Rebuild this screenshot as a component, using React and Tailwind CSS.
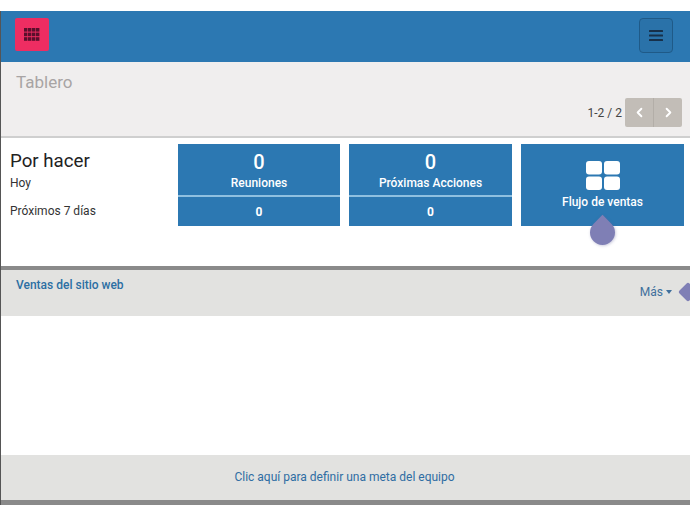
import { ChevronLeft, ChevronRight } from "lucide-react";

const font = { fontFamily: "Roboto, 'Liberation Sans', sans-serif" };

function StatCard({ label, width }) {
  return (
    <div className={`flex h-[82px] flex-col bg-[#2c78b2] text-white ${width}`}>
      <div className="flex h-[53px] flex-col items-center border-b-2 border-[#8fc0e0]">
        <span className="mt-[4px] text-[20px] leading-[28px] font-medium">0</span>
        <span className="text-[12px] leading-[15px] font-medium">{label}</span>
      </div>
      <div className="flex flex-1 items-center justify-center text-[12px] font-bold">0</div>
    </div>
  );
}

export default function App() {
  return (
    <div className="h-[505px] w-[690px] overflow-hidden bg-white pt-[11px] text-[#333]" style={font}>
      <div className="flex h-[494px] flex-col border-l-[1.5px] border-[#555]">
        {/* top bar */}
        <header className="flex h-[51px] items-start justify-between bg-[#2c78b2] pt-[7px] pr-[17px] pl-[13.5px]">
          <button className="flex h-[33px] w-[34px] items-center justify-center rounded-[2px] bg-[#ee2d62]">
            <svg width="16" height="13" viewBox="0 0 16 13" fill="#5a0f2c">
              {[0, 4.6, 9.2].map((y) =>
                [0, 4, 8, 12].map((x) => <rect key={`${x}-${y}`} x={x} y={y} width="3.4" height="3.6" />)
              )}
            </svg>
          </button>
          <button className="flex h-[35px] w-[34px] items-center justify-center rounded-[4px] border border-[#1f5a88] bg-[#2a72a9]">
            <svg width="14" height="11" viewBox="0 0 14 11" fill="#17304a">
              <rect width="14" height="2" rx="0.5" />
              <rect y="4.5" width="14" height="2" rx="0.5" />
              <rect y="9" width="14" height="2" rx="0.5" />
            </svg>
          </button>
        </header>

        {/* breadcrumb + pager */}
        <div className="flex h-[76px] flex-col border-b-2 border-[#cfcfcf] bg-[#f0eeee] pr-[8px] pl-[15px]">
          <h1 className="mt-[9px] h-[27px] text-[17px] leading-[22px] text-[#a8a4a4]">Tablero</h1>
          <div className="flex items-center justify-end">
            <span className="mr-[3px] text-[12px] text-[#444]">1-2 / 2</span>
            <div className="flex h-[29px] w-[57px] overflow-hidden rounded-[2px] bg-[#c2bdb7] text-white">
              <div className="flex flex-1 items-center justify-center border-r border-[#b3aea8]">
                <ChevronLeft size={15} strokeWidth={3} />
              </div>
              <div className="flex flex-1 items-center justify-center">
                <ChevronRight size={15} strokeWidth={3} />
              </div>
            </div>
          </div>
        </div>

        {/* to do row */}
        <div className="flex h-[128px] justify-between pt-[6px] pr-[6px] pl-[9px]">
          <div className="w-[160px]">
            <h2 className="mt-[6px] text-[18.7px] leading-[22px] text-[#222]">Por hacer</h2>
            <p className="mt-[3px] text-[12px] leading-[16px]">Hoy</p>
            <p className="mt-[12px] text-[12px] leading-[16px]">Próximos 7 días</p>
          </div>
          <div className="flex gap-[9px]">
            <StatCard label="Reuniones" width="w-[162px]" />
            <StatCard label="Próximas Acciones" width="w-[163px]" />
            <div className="relative flex h-[82px] w-[163px] flex-col items-center bg-[#2c78b2] text-white">
              <svg className="mt-[17px]" width="34" height="29" viewBox="0 0 34 29" fill="#fff">
                <rect width="16" height="13.5" rx="3" />
                <rect x="18" width="16" height="13.5" rx="3" />
                <rect y="15.5" width="16" height="13.5" rx="3" />
                <rect x="18" y="15.5" width="16" height="13.5" rx="3" />
              </svg>
              <span className="mt-[4px] text-[12px] leading-[16px] font-medium">Flujo de ventas</span>
              <span className="absolute top-[76px] left-[69px] h-[25px] w-[25px] -rotate-45 rounded-[50%_0_50%_50%] bg-[#7f7fb5] shadow-[0_1px_3px_rgba(90,90,150,0.35)]" />
            </div>
          </div>
        </div>

        {/* sales section */}
        <section className="flex h-[50px] justify-between border-t-4 border-[#8a8a8a] bg-[#e2e2e0] pl-[15px]">
          <span className="mt-[7px] text-[12px] leading-[16px] font-medium text-[#2c6fa3]">Ventas del sitio web</span>
          <div className="relative mt-[14px] mr-[18px] flex h-[16px] items-center gap-[3px] text-[12px] text-[#3f6f9c]">
            <span>Más</span>
            <span className="h-0 w-0 border-x-[3.5px] border-t-[4px] border-x-transparent border-t-[#3f6f9c]" />
            <span className="absolute top-[1px] left-[41px] h-[14px] w-[14px] rotate-45 rounded-[2px] bg-[#7f7fb5]" />
          </div>
        </section>
        <div className="h-[139px] bg-white" />

        {/* team goal */}
        <div className="flex h-[45px] items-center justify-center bg-[#e2e2e0] pr-[2px] pb-[1px] text-[12px] text-[#2f6da3]">
          Clic aquí para definir una meta del equipo
        </div>
        <div className="flex-1 bg-[#8a8a8a]" />
      </div>
    </div>
  );
}
